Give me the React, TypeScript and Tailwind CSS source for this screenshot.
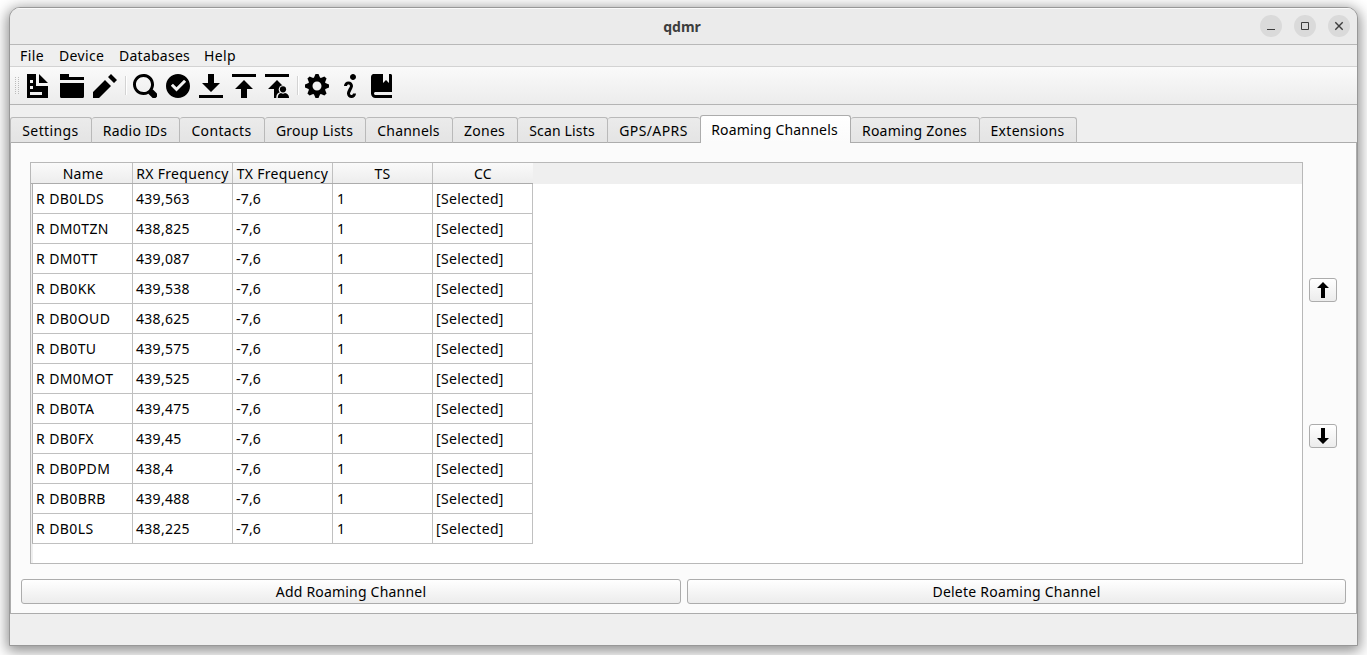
import type { ReactNode } from "react";

const icons = {
  document: "M0 0v8h7v-4h-4v-4h-3zm4 0v3h3l-3-3zm-3 2h1v1h-1v-1zm0 2h1v1h-1v-1zm0 2h4v1h-4v-1z",
  folder: "M0 0v2h8v-1h-5v-1h-3zm0 3v4.5a.5.5 0 0 0 .5.5h7a.5.5 0 0 0 .5-.5v-4.5h-8z",
  pencil: "M6 0l-1 1 2 2 1-1-2-2zm-2 2l-4 4v2h2l4-4-2-2z",
  search:
    "M3.5 0c-1.93 0-3.5 1.57-3.5 3.5s1.57 3.5 3.5 3.5c.59 0 1.17-.14 1.66-.41a1 1 0 0 0 .13.13l1 1a1.02 1.02 0 1 0 1.44-1.44l-1-1a1 1 0 0 0-.16-.13c.27-.49.44-1.06.44-1.66 0-1.93-1.55-3.5-3.5-3.5zm0 1c1.39 0 2.5 1.11 2.5 2.5 0 .66-.24 1.27-.66 1.72l-.16.16c-.44.4-1.04.63-1.69.63-1.39 0-2.5-1.11-2.5-2.5s1.11-2.5 2.5-2.5z",
  check:
    "M4 0c-2.2 0-4 1.8-4 4s1.8 4 4 4 4-1.8 4-4-1.8-4-4-4zm2 1.9l.72.72-3.22 3.22-1.9-1.9.72-.72 1.18 1.18 2.5-2.5z",
  download: "M3 0v3h-2l3 3 3-3h-2v-3h-2zm-3 7v1h8v-1h-8z",
  upload: "M0 0v1h8v-1h-8zm4 2l-3 3h2v3h2v-3h2l-3-3z",
  cog: "M3.5 0l-.5 1.19c-.1.03-.19.08-.28.13l-1.19-.5-.72.72.5 1.19c-.05.1-.09.18-.13.28l-1.19.5v1l1.19.5c.04.1.08.18.13.28l-.5 1.19.72.72 1.19-.5c.09.04.18.09.28.13l.5 1.19h1l.5-1.19c.09-.04.19-.08.28-.13l1.19.5.72-.72-.5-1.19c.04-.09.09-.19.13-.28l1.19-.5v-1l-1.19-.5c-.03-.09-.08-.19-.13-.28l.5-1.19-.72-.72-1.19.5c-.09-.04-.19-.09-.28-.13l-.5-1.19h-1zm.5 2.5c.83 0 1.5.67 1.5 1.5s-.67 1.5-1.5 1.5-1.5-.67-1.5-1.5.67-1.5 1.5-1.5z",
  info: "M5 0c-.55 0-1 .45-1 1s.45 1 1 1 1-.45 1-1-.45-1-1-1zm-1.5 2.5c-.83 0-1.5.67-1.5 1.5h1c0-.28.22-.5.5-.5s.5.22.5.5-1 1.64-1 2.5c0 .86.67 1.5 1.5 1.5s1.5-.67 1.5-1.5h-1c0 .28-.22.5-.5.5s-.5-.22-.5-.5c0-.36 1-1.84 1-2.5 0-.81-.67-1.5-1.5-1.5z",
  book: "M1 0c-.07 0-.13.01-.19.03-.39.08-.7.39-.78.78-.03.06-.03.12-.03.19v5.5c0 .83.67 1.5 1.5 1.5h5.5v-1h-5.5c-.28 0-.5-.22-.5-.5s.22-.5.5-.5h5.5v-5.5c0-.28-.22-.5-.5-.5h-.5v3l-1-1-1 1v-3h-3z",
  up: "M4 0l-3 3h2v5h2v-5h2l-3-3z",
  down: "M3 0v5h-2l3 3 3-3h-2v-5h-2z",
};

function Icon({ name, className }: { name: keyof typeof icons; className: string }) {
  return (
    <svg viewBox="0 0 8 8" className={`block shrink-0 fill-black ${className}`}>
      <path d={icons[name]} />
    </svg>
  );
}

function UploadUserIcon() {
  return (
    <svg viewBox="0 0 24 24" className="ml-[9px] block size-6 shrink-0">
      <path d="M0 0h24v3H0zM12 6l-9 9h6v9h6v-9h6z" />
      <g fill="#f3f3f3">
        <circle cx="18" cy="15.500" r="4.300" />
        <path d="M11.300 24v-1c0-3 2-4.800 5-5h3l4.700 2v4z" />
      </g>
      <circle cx="18" cy="15.300" r="3.100" />
      <path d="M12.800 24v-.8c0-2.300 1.300-3.800 3.200-4.200 1.200.9 2.800.9 4 0 2.200.4 4 1.900 4 4.200v.8z" />
    </svg>
  );
}

const tabs = [
  { label: "Settings", box: "w-[82px]", text: "tracking-[0.4px]" },
  { label: "Radio IDs", box: "w-[88px]", text: "tracking-[0.2px]" },
  { label: "Contacts", box: "w-[85px]", text: "tracking-[0.35px]" },
  { label: "Group Lists", box: "w-[101px]", text: "tracking-[0.25px]" },
  { label: "Channels", box: "w-[87px]", text: "tracking-[0.2px]" },
  { label: "Zones", box: "w-[65px]", text: "tracking-[0.3px]" },
  { label: "Scan Lists", box: "w-[90px]", text: "tracking-[0.15px]" },
  { label: "GPS/APRS", box: "w-[92px]", text: "tracking-[0.4px]" },
  { label: "Roaming Channels", box: "w-[151px]", text: "tracking-[0.2px]", active: true },
  { label: "Roaming Zones", box: "w-[129px]", text: "tracking-[0.2px]" },
  { label: "Extensions", box: "w-[97px]", text: "tracking-[0.3px]" },
];

const columns = ["Name", "RX Frequency", "TX Frequency", "TS", "CC"];

const rows = [
  ["R DB0LDS", "439,563"],
  ["R DM0TZN", "438,825"],
  ["R DM0TT", "439,087"],
  ["R DB0KK", "439,538"],
  ["R DB0OUD", "438,625"],
  ["R DB0TU", "439,575"],
  ["R DM0MOT", "439,525"],
  ["R DB0TA", "439,475"],
  ["R DB0FX", "439,45"],
  ["R DB0PDM", "438,4"],
  ["R DB0BRB", "439,488"],
  ["R DB0LS", "438,225"],
];

const cellText = [
  "pl-[3px] tracking-[0.4px]",
  "pl-[3px] tracking-[0.3px]",
  "pl-[3px] tracking-[0.2px]",
  "pl-[4px]",
  "pl-[3px] tracking-[0.32px]",
];

function WindowButton({ children }: { children: ReactNode }) {
  return (
    <button className="size-[22px] rounded-full bg-[#dadada]">
      <svg viewBox="0 0 22 22" className="block size-[22px]" fill="none" stroke="#3d3d3d">
        {children}
      </svg>
    </button>
  );
}

function Separator({ className }: { className: string }) {
  return <div className={`h-[19px] w-0.5 border-l border-[#d3d3d3] bg-white ${className}`} />;
}

function PushButton({ children, className }: { children: ReactNode; className: string }) {
  return (
    <button
      className={`flex items-center justify-center rounded-[3px] border border-[#acacac] bg-linear-to-b from-white to-[#ececec] ${className}`}
    >
      {children}
    </button>
  );
}

export default function App() {
  return (
    <div className="h-[655px] w-[1367px] overflow-hidden bg-white pt-[7px] pl-[9px] font-['Noto_Sans','Open_Sans',sans-serif] text-[14px] leading-5 text-black">
      <div className="flex h-[639px] w-[1349px] flex-col overflow-hidden rounded-t-[11px] border border-[#989898] bg-[#efefef] shadow-[0_3px_14px_2px_rgba(0,0,0,0.45)]">
        <header className="flex h-[37px] shrink-0 items-center border-b border-[#b8b8b8] bg-[#ebebeb] shadow-[inset_0_1px_0_#fafafa]">
          <div className="w-[94px]" />
          <h1 className="flex-1 pt-px text-center font-bold text-[#3d3d3d]">qdmr</h1>
          <div className="flex w-[97px] gap-3">
            <WindowButton>
              <path d="M7 14.500h8" />
            </WindowButton>
            <WindowButton>
              <path d="M7.500 7.500h7v7h-7z" />
            </WindowButton>
            <WindowButton>
              <path d="M7.300 7.300l7.400 7.400M14.700 7.300l-7.400 7.400" strokeWidth="1.400" />
            </WindowButton>
          </div>
        </header>

        <nav className="flex h-[22px] shrink-0 items-center border-b border-[#d3d3d3] pl-[10px]">
          <span className="w-[39px] tracking-[0.4px]">File</span>
          <span className="w-[60px] tracking-[0.35px]">Device</span>
          <span className="w-[85px] tracking-[0.25px]">Databases</span>
          <span className="tracking-[0.35px]">Help</span>
        </nav>

        <div className="flex h-[38px] shrink-0 items-center border-b border-[#b4b4b4] bg-linear-to-b from-[#fafafa] to-[#ececec]">
          <svg viewBox="0 0 5 17" className="ml-[5px] block h-[17px] w-[5px] shrink-0">
            <path d="M.5 0v17M3.500 0v17" stroke="#bcbcbc" strokeDasharray="1 1" />
          </svg>
          <Icon name="document" className="ml-[7px] size-6" />
          <Icon name="folder" className="ml-[9px] size-6" />
          <Icon name="pencil" className="ml-[9px] size-6" />
          <Separator className="ml-2" />
          <Icon name="search" className="ml-[6px] size-6" />
          <Icon name="check" className="ml-[9px] size-6" />
          <Icon name="download" className="ml-[9px] size-6" />
          <Icon name="upload" className="ml-[9px] size-6" />
          <UploadUserIcon />
          <Separator className="ml-2" />
          <Icon name="cog" className="ml-[6px] size-6" />
          <Icon name="info" className="ml-[9px] size-6" />
          <Icon name="book" className="ml-[9px] size-6" />
        </div>

        <div className="z-10 -mb-px flex h-[38px] shrink-0 items-end">
          {tabs.map((tab, i) =>
            tab.active ? (
              <div
                key={tab.label}
                className={`flex h-7 shrink-0 items-center justify-center rounded-t-[3px] border border-b-0 border-[#acacac] bg-linear-to-b from-white to-[#fbfbfb] pt-px pr-0.5 ${tab.box}`}
              >
                <span className={tab.text}>{tab.label}</span>
              </div>
            ) : (
              <div
                key={tab.label}
                className={`flex h-[26px] shrink-0 items-center justify-center rounded-t-[3px] border-y border-[#b9b9b9] border-b-[#acacac] bg-linear-to-b from-[#ebebeb] to-[#e4e4e4] pt-0.5 pr-px ${i === 0 ? "border-l" : ""} ${i === 7 ? "" : "border-r"} ${tab.box}`}
              >
                <span className={tab.text}>{tab.label}</span>
              </div>
            ),
          )}
        </div>

        <main className="flex h-[472px] shrink-0 flex-col border border-[#acacac] bg-[#fbfbfb] pt-[19px]">
          <div className="flex pl-[19px]">
            <div className="h-[402px] w-[1273px] border border-[#b8b8b8] bg-white">
              <div className="flex h-[21px] bg-[#efefef]">
                <div className="flex w-[502px] border-b border-[#acacac] bg-linear-to-b from-[#fafafa] to-[#ededed]">
                  {columns.map((name, i) => (
                    <div
                      key={name}
                      className={`flex shrink-0 items-center justify-center pt-px whitespace-nowrap tracking-[0.3px] ${i === 0 ? "w-[102px] pl-[3px]" : "w-[100px]"} ${i === 4 ? "" : "border-r border-[#c0c0c0]"}`}
                    >
                      {name}
                    </div>
                  ))}
                </div>
              </div>
              <div className="flex h-[379px]">
                <div className="w-px bg-[#efefef]" />
                <div className="flex w-[501px] flex-col">
                  {rows.map(([name, rx]) => (
                    <div key={name} className="flex h-[30px] border-b border-l border-[#c0c0c0] border-l-[#b0b0b0]">
                      {[name, rx, "-7,6", "1", "[Selected]"].map((value, i) => (
                        <div
                          key={i}
                          className={`flex w-[100px] shrink-0 items-center border-r border-[#c0c0c0] ${cellText[i]}`}
                        >
                          {value}
                        </div>
                      ))}
                    </div>
                  ))}
                  <div className="w-px flex-1 bg-[#efefef]" />
                </div>
              </div>
            </div>
            <div className="ml-[6px] flex flex-col pt-[116px]">
              <PushButton className="h-6 w-7">
                <Icon name="up" className="size-4" />
              </PushButton>
              <PushButton className="mt-[122px] h-6 w-7">
                <Icon name="down" className="size-4" />
              </PushButton>
            </div>
          </div>
          <div className="mt-[15px] flex gap-[6px] pl-[10px]">
            <PushButton className="h-[25px] w-[660px] tracking-[0.2px]">Add Roaming Channel</PushButton>
            <PushButton className="h-[25px] w-[659px] tracking-[0.23px]">Delete Roaming Channel</PushButton>
          </div>
        </main>
        <footer className="flex-1 bg-[#efefef]" />
      </div>
    </div>
  );
}
